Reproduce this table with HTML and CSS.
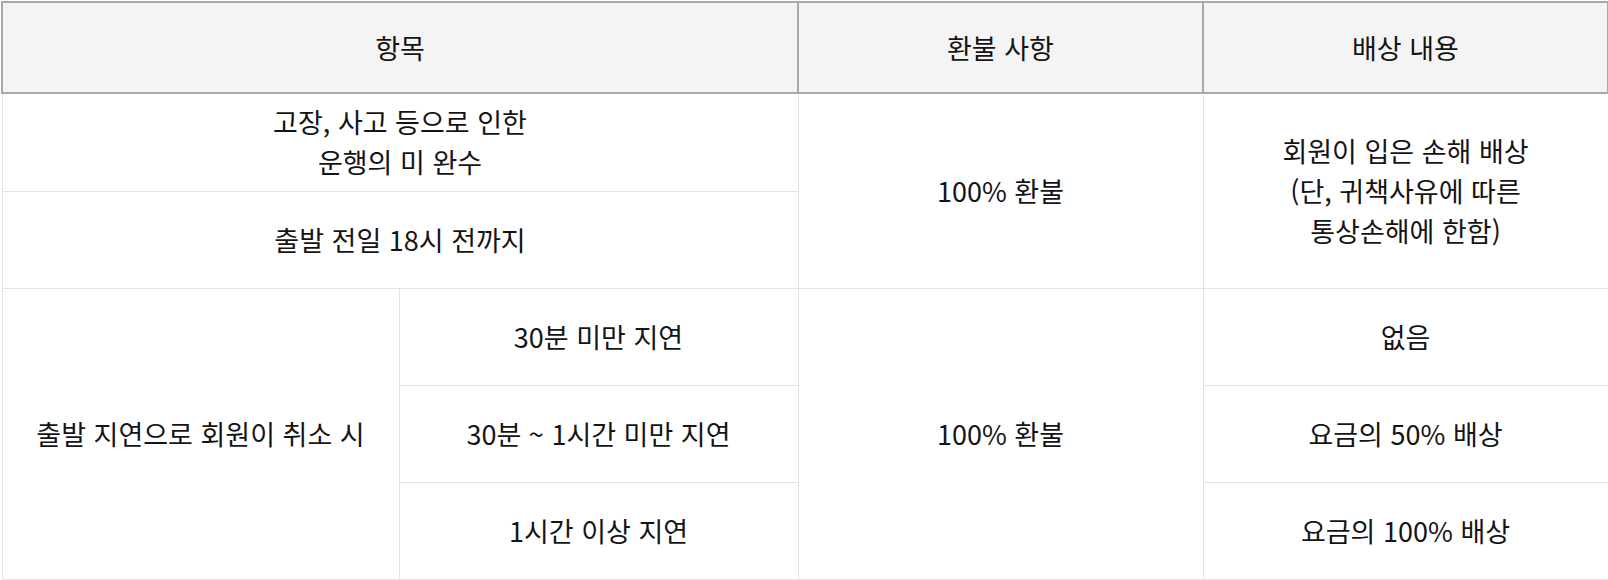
FILE: index.html
```html
<!DOCTYPE html>
<html lang="ko">
<head>
<meta charset="utf-8">
<link rel="stylesheet" href="styles.css">
</head>
<body>
<table class="refund">
  <colgroup>
    <col class="c1"><col class="c2"><col class="c3"><col class="c4">
  </colgroup>
  <thead>
    <tr class="head">
      <th colspan="2">항목</th>
      <th>환불 사항</th>
      <th>배상 내용</th>
    </tr>
  </thead>
  <tbody>
    <tr class="r1">
      <td colspan="2">고장, 사고 등으로 인한<br>운행의 미 완수</td>
      <td rowspan="2">100% 환불</td>
      <td rowspan="2">회원이 입은 손해 배상<br>(단, 귀책사유에 따른<br>통상손해에 한함)</td>
    </tr>
    <tr class="r">
      <td colspan="2">출발 전일 18시 전까지</td>
    </tr>
    <tr class="r">
      <td rowspan="3">출발 지연으로 회원이 취소 시</td>
      <td>30분 미만 지연</td>
      <td rowspan="3">100% 환불</td>
      <td>없음</td>
    </tr>
    <tr class="r">
      <td>30분 ~ 1시간 미만 지연</td>
      <td>요금의 50% 배상</td>
    </tr>
    <tr class="r">
      <td>1시간 이상 지연</td>
      <td>요금의 100% 배상</td>
    </tr>
  </tbody>
</table>
</body>
</html>
```

FILE: styles.css
```css
html, body {
  margin: 0;
  padding: 0;
  background: #ffffff;
}

body {
  padding: 1px 0 0 1px;
  font-family: "Noto Sans CJK KR", "Noto Sans", sans-serif;
  color: #141414;
}

.refund {
  width: 1606px;
  table-layout: fixed;
  border-collapse: collapse;
  font-size: 27px;
  line-height: 40px;
}

.c1 { width: 397px; }
.c2 { width: 399px; }
.c3 { width: 405px; }
.c4 { width: 405px; }

.refund th,
.refund td {
  padding: 0 8px;
  text-align: center;
  vertical-align: middle;
  font-weight: 400;
}

.refund th {
  background: #f4f4f4;
  border: 2px solid #a9a9a9;
}

.refund td {
  border: 1px solid #e2e2e2;
}

.head { height: 91px; }
.r1 { height: 98px; }
.r { height: 97px; }
```
